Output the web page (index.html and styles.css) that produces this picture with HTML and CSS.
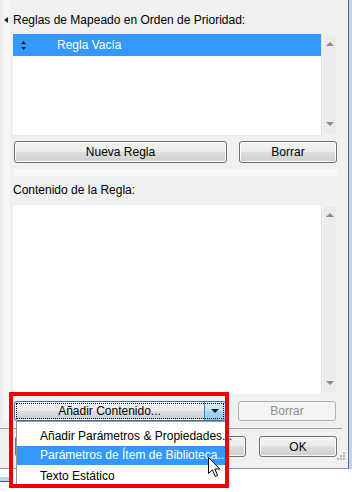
FILE: index.html
```html
<!DOCTYPE html>
<html lang="es">
<head>
  <meta charset="UTF-8">
  <title>Reglas de Mapeado</title>
  <link rel="stylesheet" href="styles.css">
</head>
<body>
  <div class="screen">
    <div class="window">
      <div class="upper">
        <div class="side"><span class="collapse"></span></div>
        <div class="main">
          <div class="label title">Reglas de Mapeado en Orden de Prioridad:</div>

          <div class="listbox rules">
            <div class="list-body">
              <div class="row selected">
                <svg class="sort" width="5" height="9" viewBox="0 0 5 9">
                  <path d="M2.5 0 L5 3 L0 3 Z M0 6 L5 6 L2.5 9 Z" fill="#1b1b1b"/>
                </svg>
                <span class="row-text">Regla Vacía</span>
              </div>
            </div>
            <div class="scroll">
              <span class="arr up"></span>
              <span class="arr down"></span>
            </div>
          </div>

          <div class="btn-row">
            <button class="btn wide">Nueva Regla</button>
            <button class="btn small">Borrar</button>
          </div>

          <div class="band"></div>

          <div class="label">Contenido de la Regla:</div>

          <div class="listbox content">
            <div class="list-body"></div>
            <div class="scroll">
              <span class="arr up"></span>
              <span class="arr down"></span>
            </div>
          </div>

          <div class="btn-row low">
            <div class="btn combo">
              <span class="combo-text">Añadir Contenido...</span>
              <span class="combo-drop"><span class="drop-arr"></span></span>
              <span class="focus"></span>
            </div>
            <button class="btn small" disabled>Borrar</button>
          </div>
        </div>
      </div>

      <div class="footer">
        <div class="sep"></div>
        <div class="foot-row">
          <!-- these two sit under the open menu -->
          <button class="btn foot"></button>
          <span class="spacer"></span>
          <button class="btn foot"></button>
          <button class="btn foot">OK</button>
        </div>
        <svg class="grip" width="8" height="8" viewBox="0 0 8 8">
          <rect x="6" y="0" width="2" height="2" fill="#b8b8b8"/>
          <rect x="3" y="3" width="2" height="2" fill="#b8b8b8"/>
          <rect x="6" y="3" width="2" height="2" fill="#b8b8b8"/>
          <rect x="0" y="6" width="2" height="2" fill="#b8b8b8"/>
          <rect x="3" y="6" width="2" height="2" fill="#b8b8b8"/>
          <rect x="6" y="6" width="2" height="2" fill="#b8b8b8"/>
        </svg>
      </div>
    </div>
    <div class="frame-edge"></div>

    <div class="menu">
      <div class="item">Añadir Parámetros &amp; Propiedades...</div>
      <div class="item active">Parámetros de Ítem de Biblioteca...</div>
      <div class="item">Texto Estático</div>
    </div>

    <div class="mark"></div>

    <svg class="cursor" width="13" height="21" viewBox="0 0 13 21">
      <path d="M0.5 0.5 L0.5 16.5 L4.5 12.8 L7.3 19.5 L9.6 18.5 L6.9 12 L11.8 12 Z" fill="#fff" stroke="#000" stroke-width="1"/>
    </svg>
  </div>
</body>
</html>
```

FILE: styles.css
```css
body {
  margin: 0;
  background: #ffffff;
  font-family: "Liberation Sans", Arial, sans-serif;
  font-size: 12px;
  color: #000;
}

.screen {
  position: relative;
  width: 352px;
  height: 492px;
}

.window {
  width: 348px;
  height: 468px;
  background: #f0f0f0;
  border-right: 1px solid #5b6b7c;
  border-bottom: 1px solid #8a96a3;
  box-shadow: 4px 0 0 #bcd6ef;
  display: flex;
  flex-direction: column;
}

.frame-edge {
  width: 12px;
  height: 4px;
  margin-top: 8px;
  background: #bcd6ef;
  border-bottom: 1px solid #4a5a6c;
}

.upper {
  display: flex;
  padding-bottom: 7px;
}

.side {
  width: 10px;
  background: #f6f6f6;
  border-left: 3px solid #ececec;
  box-sizing: border-box;
  padding-top: 17px;
}

.collapse {
  display: block;
  width: 0;
  height: 0;
  margin-left: 1px;
  border-top: 3px solid transparent;
  border-bottom: 3px solid transparent;
  border-right: 4px solid #222;
}

.main {
  width: 325px;
  padding: 13px 0 0 3px;
  display: flex;
  flex-direction: column;
}

.label {
  height: 14px;
  line-height: 14px;
  white-space: nowrap;
}

.label + .listbox {
  margin-top: 7px;
}

.listbox {
  display: flex;
  gap: 1px;
}

.rules {
  height: 101px;
}

.content {
  height: 189px;
  margin-top: 8px !important;
}

.list-body {
  width: 308px;
  background: #fff;
  box-shadow: 1px 0 1px #e2e2e2;
}

.row {
  height: 22px;
  display: flex;
  align-items: center;
}

.row.selected {
  background: #3399ff;
  color: #fff;
}

.sort {
  margin-left: 8px;
}

.row-text {
  margin-left: 31px;
}

.scroll {
  width: 15px;
  background: #ebebeb;
  border: 1px solid #f3f3f3;
  box-sizing: border-box;
  display: flex;
  flex-direction: column;
  justify-content: space-between;
  align-items: center;
  padding: 7px 0 8px;
}

.arr {
  width: 0;
  height: 0;
  border-left: 4px solid transparent;
  border-right: 4px solid transparent;
}

.arr.up {
  border-bottom: 4px solid #8a8a8a;
}

.arr.down {
  border-top: 4px solid #8a8a8a;
}

.btn-row {
  display: flex;
  gap: 12px;
  margin: 6px 0 0 1px;
}

.btn-row.low {
  margin-top: 7px;
}

.btn {
  font-family: inherit;
  font-size: 12px;
  color: #000;
  height: 22px;
  padding: 0;
  border: 1px solid #707070;
  border-radius: 3px;
  background: linear-gradient(#f3f3f3 0%, #ebebeb 48%, #dddddd 52%, #cfcfcf 100%);
  box-shadow: inset 0 0 0 1px #fbfbfb;
}

.low .btn {
  height: 20px;
}

.wide {
  width: 213px;
}

.small {
  width: 98px;
}

.btn:disabled {
  color: #8d8d8d;
  border-color: #adb2b5;
  background: #f4f4f4;
  box-shadow: none;
}

.band {
  height: 7px;
  margin-top: 6px;
  background: #f6f6f6;
  margin-bottom: 7px;
}

.combo {
  position: relative;
  width: 212px;
  box-sizing: border-box;
  display: flex;
  border-color: #3c6e96;
}

.combo-text {
  flex: 1;
  text-align: center;
  line-height: 18px;
}

.combo-drop {
  width: 20px;
  border-left: 1px solid #3c7fb1;
  background: linear-gradient(#d9effc 0%, #bfe2f7 48%, #a6d6f3 52%, #8fcaee 100%);
  display: flex;
  align-items: center;
  justify-content: center;
  border-radius: 0 2px 2px 0;
}

.drop-arr {
  width: 0;
  height: 0;
  border-left: 4px solid transparent;
  border-right: 4px solid transparent;
  border-top: 4px solid #1a1a1a;
}

.focus {
  position: absolute;
  inset: 1px;
  border: 1px dotted #000;
}

.footer {
  position: relative;
  flex: 1;
}

.sep {
  height: 1px;
  width: 342px;
  background: #a0a0a0;
}

.foot-row {
  display: flex;
  gap: 13px;
  padding: 7px 11px 0 15px;
}

.foot {
  width: 78px;
  height: 21px;
}

.spacer {
  flex: 1;
}

.grip {
  position: absolute;
  right: 3px;
  bottom: 8px;
}

.menu {
  position: absolute;
  left: 16px;
  top: 421px;
  width: 211px;
  height: 66px;
  box-sizing: border-box;
  background: #fff;
  border: 1px solid #979797;
  padding-top: 5px;
}

.item {
  height: 19px;
  line-height: 19px;
  padding-left: 23px;
  white-space: nowrap;
}

.item:last-child {
  height: 20px;
  line-height: 22px;
}

.item.active {
  background: #3399ff;
  color: #fff;
}

.mark {
  position: absolute;
  left: 9px;
  top: 392px;
  width: 220px;
  height: 96px;
  box-sizing: border-box;
  border: 4px solid #ee0000;
}

.cursor {
  position: absolute;
  left: 208px;
  top: 457px;
}
```
